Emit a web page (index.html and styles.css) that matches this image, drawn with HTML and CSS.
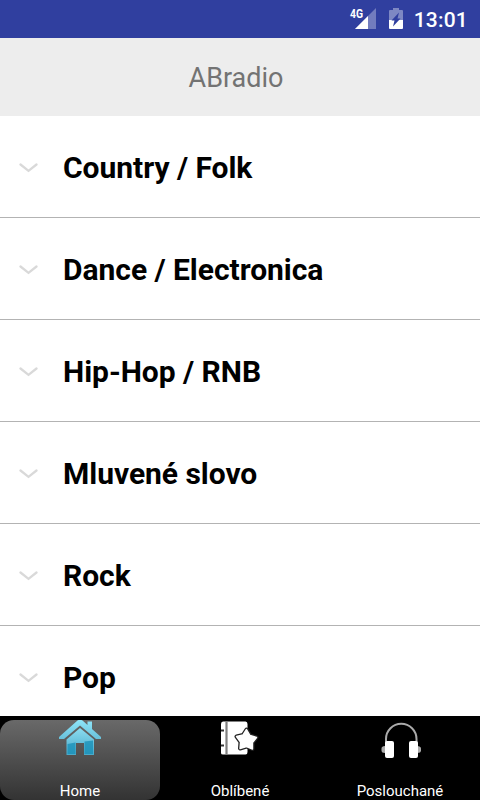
FILE: index.html
```html
<!DOCTYPE html>
<html lang="cs">
<head>
<meta charset="utf-8">
<title>ABradio</title>
<link rel="stylesheet" href="styles.css">
</head>
<body>
<div class="screen">
  <div class="status">
    <svg class="signal" width="27" height="28" viewBox="0 -3 27 28">
      <path d="M26 0V21H5Z" fill="#fff" fill-opacity=".32"/>
      <path d="M18 8V21H5Z" fill="#fff"/>
      <text class="network" x="0" y="9.500" textLength="13" lengthAdjust="spacingAndGlyphs">4G</text>
    </svg>
    <svg class="battery" width="14" height="22" viewBox="0 0 14 22">
      <path d="M0 3Q0 2 1 2H4V0H10V2H13Q14 2 14 3V12H0Z" fill="#fff" fill-opacity=".38"/>
      <path d="M0 12H14V20Q14 21 13 21H1Q0 21 0 20Z" fill="#fff"/>
      <path d="M10 4.500L8.500 10.500H11.500L4 18.500L5.500 12.500H2.500Z" fill="#303f9f"/>
    </svg>
    <span class="clock">13:01</span>
  </div>
  <header class="header">ABradio</header>
  <main class="list">
    <div class="row"><svg class="chevron" viewBox="0 0 20 12"><path d="M2.500 2.500L10.500 8.900L18.500 2.500"/></svg><span>Country / Folk</span></div>
    <div class="row"><svg class="chevron" viewBox="0 0 20 12"><path d="M2.500 2.500L10.500 8.900L18.500 2.500"/></svg><span>Dance / Electronica</span></div>
    <div class="row"><svg class="chevron" viewBox="0 0 20 12"><path d="M2.500 2.500L10.500 8.900L18.500 2.500"/></svg><span>Hip-Hop / RNB</span></div>
    <div class="row"><svg class="chevron" viewBox="0 0 20 12"><path d="M2.500 2.500L10.500 8.900L18.500 2.500"/></svg><span>Mluvené slovo</span></div>
    <div class="row"><svg class="chevron" viewBox="0 0 20 12"><path d="M2.500 2.500L10.500 8.900L18.500 2.500"/></svg><span>Rock</span></div>
    <div class="row"><svg class="chevron" viewBox="0 0 20 12"><path d="M2.500 2.500L10.500 8.900L18.500 2.500"/></svg><span>Pop</span></div>
  </main>
  <nav class="tabs">
    <div class="tab active">
      <svg class="icon" viewBox="0 0 42 38">
        <defs>
          <linearGradient id="roof" x1="0" y1="0" x2="0" y2="1"><stop offset="0" stop-color="#8fe6fa"/><stop offset="1" stop-color="#68c0da"/></linearGradient>
          <linearGradient id="wall" x1="0" y1="0" x2="0" y2="1"><stop offset="0" stop-color="#8bdcf0"/><stop offset="1" stop-color="#4aa9c9"/></linearGradient>
        </defs>
        <path d="M21 8L35 19.500V35H25V23H17V35H7.500V19.500Z" fill="url(#wall)"/>
        <path d="M8.500 24L16.500 22.500V34H8.500ZM25.500 21.500L34 20.500V34H25.500Z" fill="#168db5" fill-opacity=".75"/>
        <path d="M0 17L18.500 .5Q21-1 23.500 .5L28.500 5V1.500H33V9L42 17V19H37L21 5.500L5 19H0Z" fill="url(#roof)"/>
      </svg>
      <span>Home</span>
    </div>
    <div class="tab">
      <svg class="icon" viewBox="0 0 42 38">
        <path d="M4 1.500H26.500Q28.500 1.500 28.500 4V32Q28.500 34.500 26.500 34.500H4Q2 34.500 2 33V4Q2 1.500 4 1.500Z" fill="#fff"/>
        <path d="M7.500 1.500V34.500" stroke="#808080" stroke-width="2.200"/>
        <path d="M2 10.500H5M2 25.500H5" stroke="#333" stroke-width="2"/>
        <path d="M27.500 9.500L31 15.500L37.500 17.500L33.500 22.500L33.500 29L27.500 26.500L21 28.500L21.500 22L17.500 16.500L24 15Z" fill="#fff" stroke="#222" stroke-width="4" stroke-linejoin="round"/>
        <path d="M27.500 9.500L31 15.500L37.500 17.500L33.500 22.500L33.500 29L27.500 26.500L21 28.500L21.500 22L17.500 16.500L24 15Z" fill="#fff" stroke="#fff" stroke-width="1.400" stroke-linejoin="round"/>
      </svg>
      <span>Oblíbené</span>
    </div>
    <div class="tab">
      <svg class="icon" viewBox="0 0 42 38">
        <path d="M7 23V19A15.200 15.200 0 0 1 37.500 19V23" fill="none" stroke="#aaa" stroke-width="2"/>
        <path d="M6 26V33Q2.500 33 2.500 30.500V28.500Q2.500 26 6 26ZM38 26V33Q42 33 42 30.500V28.500Q42 26 38 26Z" fill="#aaa"/>
        <rect x="6" y="21" width="9" height="17" rx="2" fill="#fff"/>
        <rect x="30" y="21" width="9" height="17" rx="2" fill="#fff"/>
      </svg>
      <span>Poslouchané</span>
    </div>
  </nav>
</div>
</body>
</html>
```

FILE: styles.css
```css
* { box-sizing: border-box; }
body { margin: 0; font-family: Roboto, sans-serif; }
.screen { width: 480px; height: 800px; display: flex; flex-direction: column; overflow: hidden; background: #fff; }
.status { flex: none; height: 38px; padding: 0 12px 0 0; display: flex; align-items: center; justify-content: flex-end; background: #303f9f; color: #fff; }
.signal { margin-right: 12px; overflow: visible; }
.network { font: 700 12.5px Roboto, sans-serif; fill: #fff; }
.battery { margin-right: 11px; }
.clock { font-size: 21px; font-weight: 500; line-height: 38px; padding-top: 2px; letter-spacing: .2px; }
.header { flex: none; height: 78px; background: #ededed; color: #737373; font-size: 27px; line-height: 80px; text-align: center; padding-right: 8px; }
.list { flex: 1; min-height: 0; overflow: hidden; }
.row { height: 102px; display: flex; align-items: center; padding: 2px 0 0 18px; border-bottom: 1px solid #b3b3b3; color: #000; font-size: 30px; font-weight: 700; letter-spacing: -.03px; }
.chevron { width: 20px; height: 12px; margin-right: 25px; fill: none; stroke: #d9d9d9; stroke-width: 2.3; stroke-linecap: round; }
.tabs { flex: none; height: 84px; padding-top: 4px; display: flex; background: #000; }
.tab { flex: 1; display: flex; flex-direction: column; align-items: center; justify-content: space-between; color: #fff; font-size: 15px; line-height: 18px; }
.active { border-radius: 14px; background: linear-gradient(#696969, #333); }
.icon { width: 42px; height: 38px; }
```
